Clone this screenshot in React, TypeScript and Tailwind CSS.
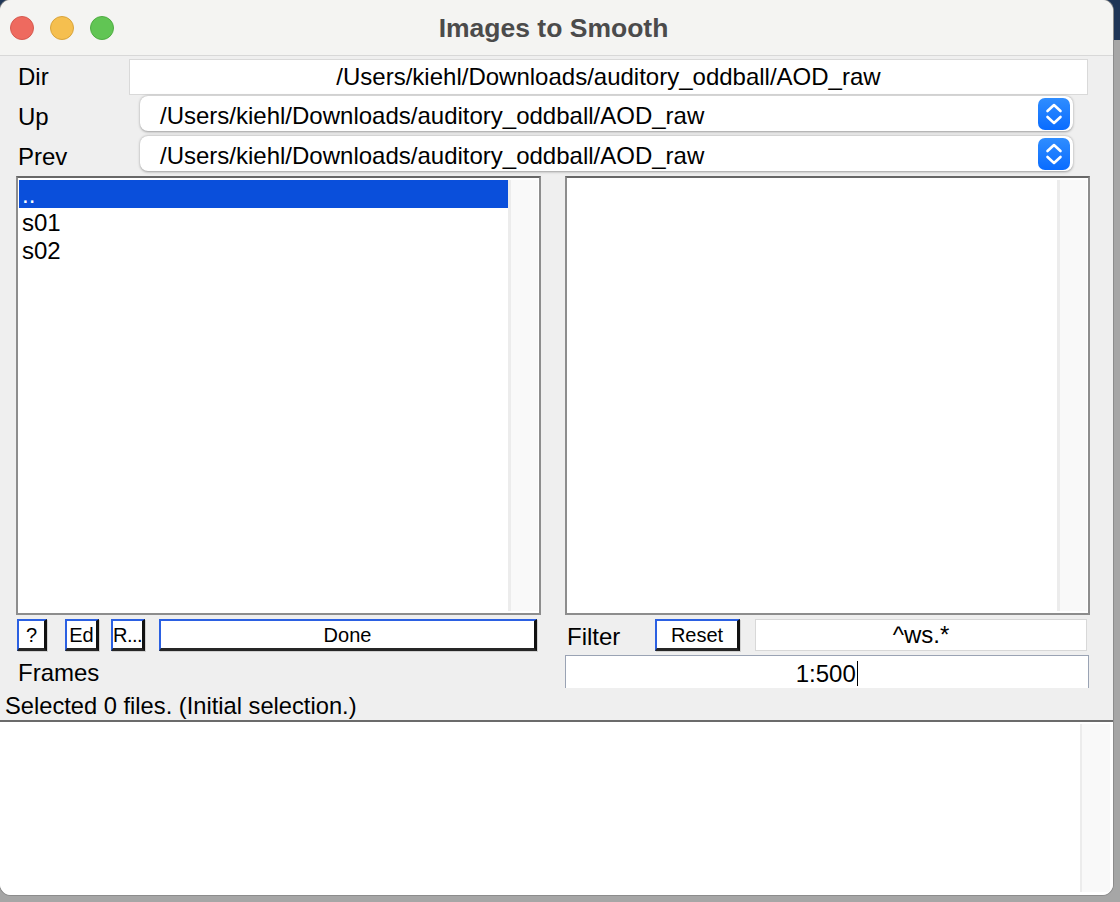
import React from "react";

function Stepper() {
  return (
    <div className="w-[32px] h-[32px] rounded-[7px] bg-[linear-gradient(#2f8dff,#0a6cff)] flex items-center justify-center shrink-0 mr-[3px]">
      <svg width="32" height="32" viewBox="0 0 32 32" fill="none" stroke="white" strokeWidth="2.6" strokeLinecap="round" strokeLinejoin="round">
        <path d="M9.5 13 L16 7 L22.5 13" />
        <path d="M9.5 19 L16 25 L22.5 19" />
      </svg>
    </div>
  );
}

function Select({ text }: { text: string }) {
  return (
    <div className="w-[933px] h-[35px] bg-white rounded-[8px] shadow-[0_0.5px_2.5px_rgba(0,0,0,0.35)] flex items-center justify-between">
      <span className="pl-[20px] pt-[5px] text-[24px] leading-[28px] text-black">{text}</span>
      <Stepper />
    </div>
  );
}

function Btn({ cls, children }: { cls: string; children: React.ReactNode }) {
  return (
    <div
      className={
        "h-[32px] bg-white border-t-2 border-l-2 border-r-[3px] border-b-[3px] border-t-[#2b60e2] border-l-[#2b60e2] border-r-[#111111] border-b-[#262626] shadow-[1px_1px_0_#d0d0d0] flex items-center justify-center text-[20px] leading-[24px] text-black overflow-hidden whitespace-nowrap shrink-0 " +
        cls
      }
    >
      {children}
    </div>
  );
}

function ListBox({ children }: { children?: React.ReactNode }) {
  return (
    <div className="w-[525px] h-full bg-white border-2 border-[#8d8d8d] border-t-[#676767] flex">
      <div className="flex-1 pt-[2px] pl-[1px] flex flex-col">{children}</div>
      <div className="w-[30px] my-[2px] mr-[1px] bg-[#f9f9f9] border-l-[3px] border-[#ececec]" />
    </div>
  );
}

export default function App() {
  const path = "/Users/kiehl/Downloads/auditory_oddball/AOD_raw";
  return (
    <div className="w-[1120px] h-[902px] overflow-hidden bg-[linear-gradient(180deg,#1f3657_0px,#1f3657_40px,#a6a6a6_40px,#a6a6a6_100%)] font-['Liberation_Sans',Arial,sans-serif]">
      <div className="w-[1113px] h-[895px] rounded-[11px] overflow-hidden flex flex-col bg-[#efefef] shadow-[0_0_0_1px_#8c8c8c]">
        {/* Title bar */}
        <div className="h-[56px] shrink-0 bg-[#f4f4f2] border-b border-[#d8d8d8] grid grid-cols-[1fr_auto_1fr] items-center">
          <div className="flex gap-[16px] pl-[10px]">
            <div className="w-[24px] h-[24px] rounded-full bg-[#ee6a5f] border border-[#d65a50]" />
            <div className="w-[24px] h-[24px] rounded-full bg-[#f5bf4f] border border-[#d9a43c]" />
            <div className="w-[24px] h-[24px] rounded-full bg-[#61c554] border border-[#4fad43]" />
          </div>
          <div className="text-[26.5px] font-bold text-[#4b4b4b] leading-[30px] pr-[6px]">Images to Smooth</div>
          <div />
        </div>

        {/* Dir */}
        <div className="flex items-center mt-[3px] h-[36px] shrink-0">
          <div className="w-[129px] pl-[18px] text-[24px] leading-[28px] text-black">Dir</div>
          <div className="w-[959px] h-full bg-white border border-[#d9d9d9] flex items-center justify-center text-[24px] leading-[28px] text-black">
            {path}
          </div>
        </div>

        {/* Up */}
        <div className="flex items-center mt-[1px] h-[35px] shrink-0">
          <div className="w-[140px] pl-[18px] pt-[6px] text-[24px] leading-[28px] text-black">Up</div>
          <Select text={path} />
        </div>

        {/* Prev */}
        <div className="flex items-center mt-[5px] h-[35px] shrink-0">
          <div className="w-[140px] pl-[18px] pt-[6px] text-[24px] leading-[28px] text-black">Prev</div>
          <Select text={path} />
        </div>

        {/* Lists */}
        <div className="flex pl-[16px] gap-[24px] h-[439px] mt-[5px] shrink-0">
          <ListBox>
            <div className="h-[28px] bg-[#0a4fdb] text-white text-[24px] leading-[30px] pl-[3px]">..</div>
            <div className="h-[28px] text-black text-[24px] leading-[30px] pl-[3px]">s01</div>
            <div className="h-[28px] text-black text-[24px] leading-[30px] pl-[3px]">s02</div>
          </ListBox>
          <ListBox />
        </div>

        {/* Buttons / Filter row */}
        <div className="flex pl-[16px] gap-[24px] h-[32px] mt-[4px] shrink-0">
          <div className="w-[525px] flex items-center pl-[1px]">
            <Btn cls="w-[30px]">?</Btn>
            <Btn cls="w-[34px] ml-[18px]">Ed</Btn>
            <Btn cls="w-[34px] ml-[12px] justify-start text-[19px] tracking-[-0.5px]">R...</Btn>
            <Btn cls="w-[378px] ml-[14px]">Done</Btn>
          </div>
          <div className="w-[525px] flex items-center">
            <div className="w-[90px] pl-[2px] pt-[4px] text-[24px] leading-[28px] text-black">Filter</div>
            <Btn cls="w-[85px]">Reset</Btn>
            <div className="w-[332px] h-[32px] ml-[15px] bg-white border border-[#d8d8d8] flex items-center justify-center text-[24px] leading-[28px] text-black">
              ^ws.*
            </div>
          </div>
        </div>

        {/* Frames row */}
        <div className="flex pl-[16px] gap-[24px] h-[33px] mt-[4px] shrink-0">
          <div className="w-[525px] flex items-center pl-[2px] pt-[3px] text-[24px] leading-[28px] text-black">Frames</div>
          <div className="w-[524px] h-full bg-white border-t border-l border-r border-[#9aa3b4] flex items-center justify-center pt-[3px] text-[24px] leading-[28px] text-black">
            <span>1:500</span>
            <span className="w-[1.5px] h-[25px] bg-black ml-[1px]" />
          </div>
        </div>

        {/* Status */}
        <div className="h-[32px] shrink-0 flex items-center pl-[5px] pt-[3px] text-[23.7px] leading-[28px] text-black">
          Selected 0 files. (Initial selection.)
        </div>

        <div className="h-[2px] shrink-0 bg-[#6b6b6b]" />

        {/* Bottom output area */}
        <div className="flex-1 bg-white flex justify-end">
          <div className="w-[30px] mt-[2px] mb-[3px] mr-[3px] bg-[#f9f9f9] border-l-2 border-[#ececec]" />
        </div>
      </div>
    </div>
  );
}
